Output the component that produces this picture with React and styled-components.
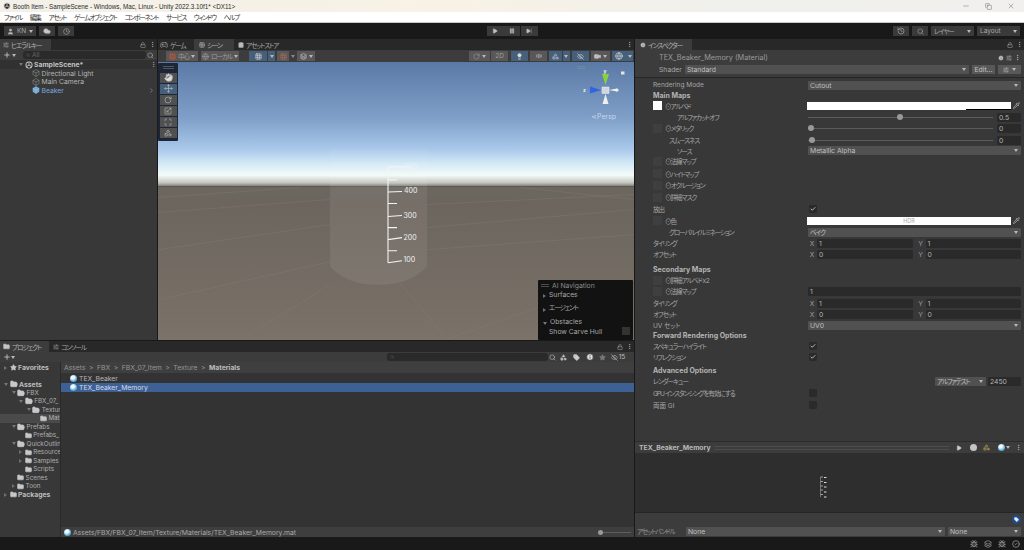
import React from "react";
import styled, { createGlobalStyle } from "styled-components";
import {
  Box, Check, ChevronRight, Clock, Cloud, Copy, EyeOff, Folder, FolderOpen, Hand, History, Info, Layers, Lightbulb,
  Lock, Maximize, Minus, Move, MoreVertical, Pause, Pipette, Play, Plus, RotateCw, Scaling, Search, Square,
  SkipForward, SlidersHorizontal, Star, Tag, User, X, Gamepad2, Grid3x3, ShoppingBag, Volume2, Shapes, Video, Globe, CircleCheck, Bug,
} from "lucide-react";

const GlobalStyle = createGlobalStyle`
  html, body { margin: 0; padding: 0; background: #191919; }
  * { box-sizing: border-box; }
  svg { flex-shrink: 0; }
`;

const Root = styled.div`
  width: 1024px;
  height: 550px;
  overflow: hidden;
  display: flex;
  flex-direction: column;
  font-family: Inter, "Noto Sans CJK JP", sans-serif;
  font-feature-settings: "palt";
  font-size: 6.8px;
  white-space: nowrap;
  color: #b4b4b4;
  background: #191919;
`;

/* japanese strings run narrower than the installed CJK font */
const Ja = styled.span`
  font-size: 6.6px;
  letter-spacing: -1.1px;
`;

const TitleBar = styled.div`
  height: 12px;
  display: flex;
  align-items: center;
  padding: 0 0 0 3px;
  gap: 2px;
  color: #2a2a2a;
  font-family: "Liberation Sans", sans-serif;
  font-size: 6.3px;
  background: linear-gradient(90deg, #f3f0e9 0%, #f8f2e6 45%, #f0f0ec 70%, #f1f0ee 100%);
`;

const TitleText = styled.span`
  flex: 1;
`;

const WinButtons = styled.div`
  display: flex;
  align-items: center;
  gap: 15px;
  padding-right: 9px;
  color: #333;
`;

const MenuBar = styled.div`
  height: 11px;
  display: flex;
  align-items: center;
  padding-left: 4px;
  gap: 7.8px;
  background: #fff;
  color: #333;
  font-size: 6.6px;
  letter-spacing: -1.2px;
  border-bottom: 1px solid #c8c8c8;
`;

const MainToolbar = styled.div`
  height: 16px;
  display: grid;
  grid-template-columns: 1fr auto 1fr;
  align-items: center;
  padding: 0 4px;
  background: #191919;
`;

const Group = styled.div`
  display: flex;
  align-items: center;
  justify-content: ${(p) => p.$justify || "flex-start"};
  gap: ${(p) => p.$gap ?? 3}px;
`;

const TopButton = styled.div`
  width: ${(p) => p.$w}px;
  height: 10px;
  display: flex;
  align-items: center;
  justify-content: ${(p) => p.$justify || "center"};
  gap: 3px;
  padding: 0 3px;
  background: #3a3a3a;
  color: #a8a8a8;
  font-size: 6.5px;
`;

const Caret = styled.span`
  display: inline-block;
  flex: none;
  margin-left: ${(p) => (p.$push ? "auto" : "0")};
  border-left: 2.5px solid transparent;
  border-right: 2.5px solid transparent;
  border-top: 3px solid ${(p) => p.$color || "#b8b8b8"};
`;

const DimCaret = styled(Caret)`
  margin: 0 2px;
  border-top-color: #888;
`;

const Workspace = styled.div`
  height: 498px;
  display: flex;
`;

const LeftColumn = styled.div`
  width: 635px;
  display: flex;
  flex-direction: column;
`;

const TopRow = styled.div`
  height: 301px;
  display: flex;
`;

const Panel = styled.div`
  display: flex;
  flex-direction: column;
  width: ${(p) => (p.$w ? `${p.$w}px` : "auto")};
  flex: ${(p) => (p.$w ? "none" : 1)};
  border-right: 1px solid #191919;
  min-width: 0;
`;

const TabStrip = styled.div`
  height: 11px;
  display: flex;
  align-items: center;
  background: #282828;
  color: #a6a6a6;
  font-size: 6.6px;
  letter-spacing: -1.05px;
  flex: none;
`;

const ProjectStrip = styled(TabStrip)`
  height: 12px;
  border-top: 1px solid #191919;
`;

const Tab = styled.div`
  height: 11px;
  width: ${(p) => p.$w}px;
  display: flex;
  align-items: center;
  gap: 2px;
  padding-left: ${(p) => p.$pad ?? 3}px;
  background: ${(p) => (p.$active ? "#3c3c3c" : "transparent")};
  color: ${(p) => (p.$active ? "#b0b0b0" : "#a6a6a6")};
`;

const StripEnd = styled.div`
  margin-left: auto;
  display: flex;
  align-items: center;
  gap: 3px;
  padding-right: 1px;
  color: #a8a8a8;
`;

const HierarchyBar = styled.div`
  height: 10px;
  display: flex;
  align-items: center;
  padding: 0 3px;
  gap: 1px;
  background: #3c3c3c;
  color: #c8c8c8;
`;

const SearchBox = styled.div`
  flex: ${(p) => (p.$w ? "none" : 1)};
  width: ${(p) => (p.$w ? `${p.$w}px` : "auto")};
  height: 7.5px;
  display: flex;
  align-items: center;
  gap: 2px;
  padding-left: 3px;
  margin-left: ${(p) => p.$left ?? 6}px;
  border-radius: 3px;
  background: #2a2a2a;
  color: #666;
  font-size: 6.5px;
`;

const TreePane = styled.div`
  flex: 1;
  background: #383838;
`;

const SceneRow = styled.div`
  height: 9px;
  display: flex;
  align-items: center;
  padding-left: 19px;
  gap: 1.5px;
  background: #313131;
  font-weight: 700;
  color: #c4c4c4;
`;

const ObjectRow = styled.div`
  height: 8.5px;
  display: flex;
  align-items: center;
  padding: 0 2px 0 32px;
  gap: 1.5px;
  color: ${(p) => (p.$blue ? "#7ba6dc" : "#b4b4b4")};
`;

const PushRight = styled.span`
  margin-left: auto;
  display: flex;
  align-items: center;
  color: #a0a0a0;
`;

const Triangle = styled.span`
  display: inline-block;
  flex: none;
  width: 0;
  height: 0;
  ${(p) =>
    p.$open
      ? `border-left: 2.5px solid transparent; border-right: 2.5px solid transparent; border-top: 3.5px solid #777;`
      : `border-top: 2.5px solid transparent; border-bottom: 2.5px solid transparent; border-left: 3.5px solid #6f6f6f;`}
`;

const UnityMark = () => (
  <svg width="8" height="8" viewBox="0 0 16 16">
    <circle cx="8" cy="8" r="7" fill="#d8d8d8" />
    <path d="M8 2l5 3v6l-5 3-5-3V5z" fill="#2e2e2e" />
    <path d="M8 8V2M8 8l5 3M8 8l-5 3" stroke="#d8d8d8" strokeWidth="1.6" />
  </svg>
);

const SceneBar = styled.div`
  height: 12px;
  display: flex;
  align-items: center;
  padding: 0 1px 0 8px;
  background: #3c3c3c;
  flex: none;
`;

const BarButton = styled.div`
  width: ${(p) => p.$w}px;
  height: 10px;
  margin-left: ${(p) => (p.$push ? "auto" : `${p.$left ?? 0}px`)};
  display: flex;
  align-items: center;
  justify-content: ${(p) => p.$justify || "center"};
  gap: 2px;
  padding: 0 2px;
  flex: none;
  background: ${(p) => (p.$active ? "#46607c" : "#585858")};
  color: ${(p) => (p.$dim ? "#9c9c9c" : "#d4d4d4")};
  font-size: 6.5px;
`;

const Viewport = styled.div`
  position: relative;
  flex: 1;
  overflow: hidden;
`;

const SceneArt = styled.svg`
  display: block;
  width: 100%;
  height: 100%;
`;

const ToolPalette = styled.div`
  position: absolute;
  left: 0;
  top: 1px;
  width: 20px;
  height: 78px;
  display: flex;
  flex-direction: column;
  align-items: center;
  gap: 0.5px;
  background: #1c2636;
  border-radius: 1px;
`;

const Grip = styled.div`
  width: 11px;
  height: 3px;
  margin: 3px 0;
  border-top: 1px solid #4e5662;
  border-bottom: 1px solid #4e5662;
`;

const ToolButton = styled.div`
  width: 17px;
  height: 10.5px;
  display: flex;
  align-items: center;
  justify-content: center;
  flex: none;
  background: ${(p) => (p.$active ? "#46607c" : "#505050")};
  color: #b4b4b4;
`;

const Gizmo = styled.svg`
  position: absolute;
  right: 0;
  top: 0;
  width: 76px;
  height: 70px;
`;

const OverlayPanel = styled.div`
  position: absolute;
  right: 1px;
  bottom: 0;
  width: 95px;
  height: 60px;
  background: #121212;
  border-radius: 1px;
  color: #a8a8a8;
`;

const OverlayTitle = styled.div`
  height: 10px;
  display: flex;
  align-items: center;
  gap: 3px;
  padding-left: 3px;
  color: #8b8b8b;
`;

const OverlayGrip = styled.span`
  width: 8px;
  height: 3px;
  border-top: 1px solid #4c4c4c;
  border-bottom: 1px solid #4c4c4c;
`;

const OverlayRow = styled.div`
  height: ${(p) => p.$h}px;
  display: flex;
  align-items: flex-start;
  gap: 3px;
  padding-left: ${(p) => p.$pad ?? 5}px;
  line-height: 9px;
`;

const OverlayArrow = styled.span`
  margin-top: 1px;
`;

const SmallBox = styled.div`
  width: 8px;
  height: 8px;
  margin-left: auto;
  margin-right: 3px;
  background: #333;
`;

const ProjectBar = styled.div`
  height: 10px;
  display: flex;
  align-items: center;
  padding: 0 2px 0 3px;
  background: #3c3c3c;
  color: #c8c8c8;
  flex: none;
`;

const IconSlot = styled.span`
  width: ${(p) => p.$w ?? 13}px;
  display: flex;
  align-items: center;
  justify-content: center;
  gap: 1px;
  color: ${(p) => p.$color || "#bdbdbd"};
  font-size: 6.5px;
`;

const ProjectBody = styled.div`
  flex: 1;
  display: flex;
  min-height: 0;
`;

const ProjectTree = styled.div`
  width: 61px;
  flex: none;
  overflow: hidden;
  padding-top: 1.5px;
  font-size: 6.3px;
  background: #383838;
  border-right: 1px solid #2a2a2a;
`;

const TreeRow = styled.div`
  height: 8.5px;
  display: flex;
  align-items: center;
  padding-left: ${(p) => 4 + p.$depth * 7.6}px;
  margin-top: ${(p) => p.$gap ?? 0}px;
  gap: 1.5px;
  background: ${(p) => (p.$hl ? "#4a4a4a" : "transparent")};
  font-size: ${(p) => (p.$bold ? "6.8px" : "inherit")};
  font-weight: ${(p) => (p.$bold ? 700 : 400)};
  color: ${(p) => (p.$bold ? "#bdbdbd" : "#b0b0b0")};
`;

const ArrowSlot = styled.span`
  width: 4px;
  flex: none;
  display: flex;
  align-items: center;
`;

const FileArea = styled.div`
  flex: 1;
  display: flex;
  flex-direction: column;
  background: #333;
  min-width: 0;
`;

const Breadcrumb = styled.div`
  height: 11px;
  display: flex;
  align-items: center;
  padding-left: 3px;
  gap: 3.5px;
  flex: none;
  background: #3f3f3f;
  color: #959595;
`;

const Crumb = styled.span`
  font-weight: ${(p) => (p.$current ? 700 : 400)};
  color: ${(p) => (p.$current ? "#bcbcbc" : "#959595")};
`;

const FileList = styled.div`
  flex: 1;
  padding-top: 1.5px;
`;

const FileRow = styled.div`
  height: 8.5px;
  display: flex;
  align-items: center;
  gap: 2px;
  padding-left: 9px;
  background: ${(p) => (p.$selected ? "#3e6195" : "transparent")};
  color: ${(p) => (p.$selected ? "#d4dceb" : "#b4b4b4")};
`;

const Sphere = styled.span`
  display: inline-block;
  flex: none;
  width: 7px;
  height: 7px;
  border-radius: 50%;
  background: ${(p) =>
    p.$flat ? "#c4c4c4" : "radial-gradient(circle at 40% 35%, #f4f8fb 0 25%, #6fc0e6 55%, #2d6f96 100%)"};
`;

const PathBar = styled.div`
  height: 10px;
  display: flex;
  align-items: center;
  gap: 2px;
  padding: 0 3px 0 3px;
  flex: none;
  background: #3e3e3e;
  color: #a8a8a8;
`;

const ZoomSlider = styled.div`
  position: relative;
  margin-left: auto;
  width: 33px;
  height: 1px;
  background: #5e5e5e;
`;

const ZoomKnob = styled.span`
  position: absolute;
  left: 0;
  top: -2px;
  width: 5px;
  height: 5px;
  border-radius: 50%;
  background: #999;
`;

const Inspector = styled.div`
  flex: 1;
  display: flex;
  flex-direction: column;
  min-width: 0;
  background: #383838;
`;

const MatHeader = styled.div`
  height: 28px;
  flex: none;
  padding: 1px 3px 0 24px;
  background: #3c3c3c;
  border-bottom: 1px solid #262626;
`;

const MatTitleRow = styled.div`
  height: 13px;
  display: flex;
  align-items: center;
  font-size: 7.3px;
  color: #999;
`;

const MatIcons = styled.div`
  margin-left: auto;
  display: flex;
  align-items: center;
  gap: 2px;
  color: #bbb;
`;

const ShaderRow = styled.div`
  height: 11px;
  display: flex;
  align-items: center;
  gap: 3px;
  color: #a8a8a8;
`;

const Dropdown = styled.div`
  width: ${(p) => (p.$w ? `${p.$w}px` : "auto")};
  flex: ${(p) => (p.$w ? "none" : 1)};
  height: 9px;
  display: flex;
  align-items: center;
  padding: 0 3px 0 2px;
  border-radius: 1px;
  background: #515151;
  color: #c0c0c0;
  margin-left: ${(p) => p.$left ?? 0}px;
`;

const SmallButton = styled.div`
  width: 23px;
  height: 9px;
  display: flex;
  align-items: center;
  justify-content: center;
  gap: 3px;
  background: #585858;
  color: #c4c4c4;
`;

const PropList = styled.div`
  flex: 1;
  padding: 2px 3px 0 18px;
`;

const PropRow = styled.div`
  height: ${(p) => p.$h}px;
  display: flex;
  align-items: flex-start;
`;

const PropLabel = styled.div`
  width: 155px;
  flex: none;
  height: 10px;
  display: flex;
  align-items: center;
  gap: 3px;
  padding-left: ${(p) => p.$indent ?? 0}px;
  font-size: ${(p) => (p.$latin ? 6.5 : 6.6)}px;
  letter-spacing: ${(p) => (p.$latin ? 0 : -1.05)}px;
  color: #a6a6a6;
`;

const SectionTitle = styled.div`
  height: 10px;
  display: flex;
  align-items: center;
  font-size: 7px;
  font-weight: 700;
  color: #b4b4b4;
`;

const Thumb = styled.span`
  width: 9px;
  height: 9px;
  flex: none;
  background: ${(p) => (p.$white ? "#fff" : "#3f3f3f")};
`;

const Control = styled.div`
  flex: 1;
  height: 10px;
  display: flex;
  align-items: center;
  gap: 1px;
  min-width: 0;
`;

const ColorField = styled.div`
  position: relative;
  flex: 1;
  height: 8px;
  margin-left: -1px;
  display: flex;
  align-items: center;
  justify-content: center;
  background: #fff;
  color: #a8a8a8;
  font-size: 5.5px;
`;

const AlphaMark = styled.span`
  position: absolute;
  right: 0;
  bottom: 0;
  width: 45px;
  height: 1px;
  background: #000;
`;

const PipetteSlot = styled.span`
  width: 9px;
  display: flex;
  justify-content: center;
  color: #c8c8c8;
`;

const SliderTrack = styled.div`
  position: relative;
  width: 185px;
  height: 1px;
  flex: none;
  background: #5c5c5c;
`;

const SliderKnob = styled.span`
  position: absolute;
  left: ${(p) => p.$left}px;
  top: -2.5px;
  width: 6px;
  height: 6px;
  border-radius: 50%;
  background: #999;
`;

const NumField = styled.div`
  flex: ${(p) => (p.$w ? "none" : 1)};
  width: ${(p) => (p.$w ? `${p.$w}px` : "auto")};
  height: 9px;
  margin-left: ${(p) => p.$left ?? 0}px;
  display: flex;
  align-items: center;
  padding-left: 2px;
  border-radius: 1px;
  background: #2a2a2a;
  color: #b4b4b4;
`;

const AxisLabel = styled.span`
  width: 8px;
  flex: none;
  text-align: center;
  margin-left: ${(p) => p.$left ?? 0}px;
  color: #9a9a9a;
`;

const CheckBox = styled.span`
  width: 8px;
  height: 8px;
  flex: none;
  margin-left: 1px;
  display: flex;
  align-items: center;
  justify-content: center;
  border-radius: 1px;
  background: #2a2a2a;
  color: #e2e2e2;
`;

const PreviewBar = styled.div`
  height: 12px;
  flex: none;
  display: flex;
  align-items: center;
  padding: 0 2px 0 4px;
  background: #3c3c3c;
  border-top: 1px solid #2c2c2c;
  font-weight: 700;
  color: #b8b8b8;
`;

const GripLines = styled.span`
  flex: 1;
  height: 4px;
  margin: 0 3px;
  border-top: 1px solid #4c4c4c;
  border-bottom: 1px solid #4c4c4c;
`;

const PreviewArea = styled.div`
  height: 59px;
  flex: none;
  display: flex;
  align-items: center;
  justify-content: center;
  padding: 8px 14px 0 0;
  background: #2e2e2e;
`;

const BundleArea = styled.div`
  height: 25px;
  flex: none;
  display: flex;
  flex-direction: column;
  padding: 2px 3px 0 2px;
  background: #3c3c3c;
  border-top: 1px solid #262626;
`;

const TagRow = styled.div`
  height: 11px;
  display: flex;
  justify-content: flex-end;
`;

const TagBadge = styled.span`
  width: 9px;
  height: 9px;
  border-radius: 50%;
  display: flex;
  align-items: center;
  justify-content: center;
  background: #234a86;
  color: #dfe8f5;
`;

const BundleRow = styled.div`
  height: 10px;
  display: flex;
  align-items: center;
  color: #969696;
`;

const BundleLabel = styled(Ja)`
  width: 49px;
  flex: none;
`;

const StatusBar = styled.div`
  height: 13px;
  flex: none;
  display: flex;
  align-items: center;
  justify-content: flex-end;
  gap: 6px;
  padding-right: 4px;
  background: #191919;
  color: #a8a8a8;
`;

const Preview = () => (
  <svg width="8" height="22" viewBox="0 0 8 22">
    <path d="M1.5 1v20" stroke="#999" strokeWidth="0.6" />
    {[1, 5.5, 10, 14, 18.5].map((y) => (
      <path key={y} d={`M1.5 ${y}h2.5`} stroke="#bbb" strokeWidth="0.8" />
    ))}
    {[1.5, 6.5, 11, 16, 21].map((y) => (
      <path key={y} d={`M5 ${y}h2.5`} stroke="#ddd" strokeWidth="1" />
    ))}
  </svg>
);

const treeItems = [
  { name: "Favorites", depth: 0, star: true, bold: true },
  { name: "Assets", depth: 0, open: true, bold: true, gap: 8 },
  { name: "FBX", depth: 1, open: true },
  { name: "FBX_07_", depth: 2, open: true },
  { name: "Textur", depth: 3, open: true },
  { name: "Mati", depth: 4, leaf: true, hl: true },
  { name: "Prefabs", depth: 1, open: true },
  { name: "Prefabs_", depth: 2, leaf: true },
  { name: "QuickOutlin", depth: 1, open: true },
  { name: "Resource", depth: 2 },
  { name: "Samples", depth: 2 },
  { name: "Scripts", depth: 2, leaf: true },
  { name: "Scenes", depth: 1, leaf: true },
  { name: "Toon", depth: 1 },
  { name: "Packages", depth: 0, bold: true },
];

const menus = ["ファイル", "編集", "アセット", "ゲームオブジェクト", "コンポーネント", "サービス", "ウィンドウ", "ヘルプ"];

const Xy = ({ x, y }) => (
  <Control>
    <AxisLabel>X</AxisLabel>
    <NumField>{x}</NumField>
    <AxisLabel $left={3}>Y</AxisLabel>
    <NumField>{y}</NumField>
  </Control>
);

const MapLabel = ({ children }) => (
  <PropLabel>
    <Thumb />
    <span>{children}</span>
  </PropLabel>
);

const App = () => {
  return (
    <Root>
      <GlobalStyle />
      <TitleBar>
        <UnityMark />
        <TitleText>Booth Item - SampleScene - Windows, Mac, Linux - Unity 2022.3.10f1* &lt;DX11&gt;</TitleText>
        <WinButtons>
          <Minus size={8} strokeWidth={1} />
          <Copy size={7} strokeWidth={1.2} />
          <X size={8} strokeWidth={1} />
        </WinButtons>
      </TitleBar>
      <MenuBar>
        {menus.map((m) => (
          <span key={m}>{m}</span>
        ))}
      </MenuBar>
      <MainToolbar>
        <Group>
          <TopButton $w={32}>
            <User size={7} fill="#bbb" />
            KN
            <Caret />
          </TopButton>
          <TopButton $w={16}>
            <Cloud size={8} fill="#c8c8c8" />
          </TopButton>
          <TopButton $w={16}>
            <Clock size={7} />
          </TopButton>
        </Group>
        <Group $gap={0.5}>
          <TopButton $w={16}>
            <Play size={6} fill="#c0c0c0" />
          </TopButton>
          <TopButton $w={17}>
            <Pause size={6} fill="#c0c0c0" />
          </TopButton>
          <TopButton $w={17}>
            <SkipForward size={6} fill="#c0c0c0" />
          </TopButton>
        </Group>
        <Group $justify="flex-end">
          <TopButton $w={16}>
            <History size={8} />
          </TopButton>
          <TopButton $w={16}>
            <Search size={7} />
          </TopButton>
          <TopButton $w={43} $justify="flex-start">
            <Ja>レイヤー</Ja>
            <Caret $push />
          </TopButton>
          <TopButton $w={43} $justify="flex-start">
            Layout
            <Caret $push />
          </TopButton>
        </Group>
      </MainToolbar>
      <Workspace>
        <LeftColumn>
          <TopRow>
            <Panel $w={158}>
              <TabStrip>
                <Tab $w={51} $active>
                  <SlidersHorizontal size={6} />
                  ヒエラルキー
                </Tab>
                <StripEnd>
                  <Lock size={6} />
                  <MoreVertical size={7} />
                </StripEnd>
              </TabStrip>
              <HierarchyBar>
                <Plus size={8} strokeWidth={2.5} />
                <Caret />
                <SearchBox>
                  <Search size={4} />
                  All
                </SearchBox>
                <Search size={7} color="#aaa" />
              </HierarchyBar>
              <TreePane>
                <SceneRow>
                  <Triangle $open />
                  <UnityMark />
                  <span>SampleScene*</span>
                  <PushRight>
                    <MoreVertical size={7} />
                  </PushRight>
                </SceneRow>
                <ObjectRow>
                  <Box size={8} strokeWidth={1.2} />
                  Directional Light
                </ObjectRow>
                <ObjectRow>
                  <Box size={8} strokeWidth={1.2} />
                  Main Camera
                </ObjectRow>
                <ObjectRow $blue>
                  <Box size={8} fill="#6aa8dc" color="#bcd9ee" strokeWidth={1.2} />
                  Beaker
                  <PushRight>
                    <ChevronRight size={7} />
                  </PushRight>
                </ObjectRow>
              </TreePane>
            </Panel>
            <Panel>
              <TabStrip>
                <Tab $w={36} $pad={2}>
                  <Gamepad2 size={8} />
                  ゲーム
                </Tab>
                <Tab $w={40} $pad={5} $active>
                  <Grid3x3 size={6} />
                  シーン
                </Tab>
                <Tab $w={60} $pad={4}>
                  <ShoppingBag size={6} fill="#bbb" />
                  アセットストア
                </Tab>
                <StripEnd>
                  <MoreVertical size={7} />
                </StripEnd>
              </TabStrip>
              <SceneBar>
                <BarButton $w={32} $dim>
                  <Square size={7} color="#c25c44" fill="#8d5548" />
                  <Ja>中心</Ja>
                  <Caret />
                </BarButton>
                <BarButton $w={38} $left={3} $dim>
                  <Globe size={7} />
                  <Ja>ローカル</Ja>
                  <Caret />
                </BarButton>
                <BarButton $w={18} $left={10} $active>
                  <Grid3x3 size={7} />
                </BarButton>
                <BarButton $w={7} $left={1} $active>
                  <Caret />
                </BarButton>
                <BarButton $w={12} $left={2} $dim>
                  <Grid3x3 size={7} color="#a56a5c" />
                </BarButton>
                <DimCaret />
                <BarButton $w={18}>
                  <Layers size={7} />
                  <Caret />
                </BarButton>
                <BarButton $w={21} $push $dim>
                  <RotateCw size={7} />
                  <Caret />
                </BarButton>
                <BarButton $w={17} $left={1} $dim>
                  2D
                </BarButton>
                <BarButton $w={17} $left={3} $active>
                  <Lightbulb size={7} fill="#ddd" />
                </BarButton>
                <BarButton $w={17} $left={2}>
                  <Volume2 size={6} />
                </BarButton>
                <BarButton $w={13} $left={2} $active>
                  <Shapes size={7} />
                </BarButton>
                <BarButton $w={7} $left={0.5} $active>
                  <Caret />
                </BarButton>
                <BarButton $w={17} $left={2} $active>
                  <EyeOff size={7} />
                </BarButton>
                <BarButton $w={19} $left={2}>
                  <Video size={7} fill="#bbb" />
                  <Caret />
                </BarButton>
                <BarButton $w={14} $left={2} $active>
                  <Globe size={8} />
                </BarButton>
                <BarButton $w={7} $left={0.5} $active>
                  <Caret />
                </BarButton>
              </SceneBar>
              <Viewport>
                <SceneArt viewBox="158 63 476 277" preserveAspectRatio="none">
                  <defs>
                    <linearGradient id="sky" x1="0" y1="0" x2="0" y2="1">
                      <stop offset="0" stopColor="#5b79a5" />
                      <stop offset="0.45" stopColor="#7f9fc8" />
                      <stop offset="0.7" stopColor="#a9c8ea" />
                      <stop offset="0.82" stopColor="#d4eaf6" />
                      <stop offset="0.91" stopColor="#f4fbf8" />
                      <stop offset="0.97" stopColor="#c4c6c0" />
                      <stop offset="1" stopColor="#7c7a72" />
                    </linearGradient>
                    <linearGradient id="floor" x1="0" y1="0" x2="0" y2="1">
                      <stop offset="0" stopColor="#6b675f" />
                      <stop offset="0.1" stopColor="#6b655d" />
                      <stop offset="1" stopColor="#7b7269" />
                    </linearGradient>
                  </defs>
                  <rect x="158" y="63" width="476" height="124" fill="url(#sky)" />
                  <rect x="158" y="187" width="476" height="153" fill="url(#floor)" />
                  <g stroke="#8a827a" strokeWidth="0.6" opacity="0.55" fill="none">
                    <path d="M158 213L330 200M158 250L330 225M427 228L634 210M427 205L634 195" />
                    <path d="M158 300L330 262M400 283L447 340M447 339L540 307M427 250L634 235" />
                    <path d="M240 340L330 285M300 188L158 198M520 188L634 200" />
                  </g>
                  <path d="M330 183V266Q345 285 378 285Q412 285 427 266V183Z" fill="#fff" opacity="0.07" />
                  <path d="M330 150V183H427V150Z" fill="#fff" opacity="0.05" />
                  <g stroke="#f4f4f4" strokeWidth="1.1" fill="none">
                    <path d="M388 167.5V263" />
                    <path d="M388 167.5H411M388 180.5H397M388 192.5L402 192M388 204H397M388 217L402 216M388 228H397M388 240L402 238M388 251H397M388 263L402 261" />
                  </g>
                  <g fill="#f0f0f0" fontSize="7" fontFamily="Inter, sans-serif">
                    <text x="404" y="194">400</text>
                    <text x="403.5" y="218">300</text>
                    <text x="403.5" y="240">200</text>
                    <text x="403.5" y="262">100</text>
                    <text x="404" y="170" fill="#eef5f8" opacity="0.7">500</text>
                  </g>
                </SceneArt>
                <ToolPalette>
                  <Grip />
                  <ToolButton>
                    <Hand size={9} fill="#ddd" />
                  </ToolButton>
                  <ToolButton $active>
                    <Move size={9} />
                  </ToolButton>
                  <ToolButton>
                    <RotateCw size={8} />
                  </ToolButton>
                  <ToolButton>
                    <Scaling size={8} />
                  </ToolButton>
                  <ToolButton>
                    <Maximize size={8} />
                  </ToolButton>
                  <ToolButton>
                    <Shapes size={8} />
                  </ToolButton>
                </ToolPalette>
                <Gizmo viewBox="558 63 76 70">
                  <path d="M605.5 86L602 75H609Z" fill="#86d33e" />
                  <path d="M601 91L590 87.5V94.5Z" fill="#2f66e0" />
                  <path d="M605.5 95L602.5 105H608.5Z" fill="#f0f0f0" />
                  <path d="M609 91L617 89.5V92.5Z" fill="#f0f0f0" />
                  <circle cx="617" cy="91" r="1.6" fill="#f0f0f0" />
                  <rect x="602" y="88" width="7" height="6.5" fill="#cfd6de" stroke="#eef" strokeWidth="0.5" />
                  <text x="603.5" y="74" fontSize="5" fill="#f2f2f2" fontFamily="Inter, sans-serif" fontWeight="700">y</text>
                  <text x="583" y="93" fontSize="5" fill="#f2f2f2" fontFamily="Inter, sans-serif" fontWeight="700">z</text>
                  <rect x="621" y="72.5" width="3.5" height="3" fill="#e4e4e4" />
                  <path d="M577 67.5h8M577 69.5h8" stroke="#7b8ba6" strokeWidth="0.7" />
                  <text x="591" y="120" fontSize="7" fill="#c8d6ea" fontFamily="Inter, sans-serif">⋖Persp</text>
                </Gizmo>
                <OverlayPanel>
                  <OverlayTitle>
                    <OverlayGrip />
                    AI Navigation
                  </OverlayTitle>
                  <OverlayRow $h={13.5}>
                    <OverlayArrow>
                      <Triangle />
                    </OverlayArrow>
                    Surfaces
                  </OverlayRow>
                  <OverlayRow $h={13.5}>
                    <OverlayArrow>
                      <Triangle />
                    </OverlayArrow>
                    <Ja>エージェント</Ja>
                  </OverlayRow>
                  <OverlayRow $h={10}>
                    <OverlayArrow>
                      <Triangle $open />
                    </OverlayArrow>
                    Obstacles
                  </OverlayRow>
                  <OverlayRow $h={10} $pad={11}>
                    Show Carve Hull
                    <SmallBox />
                  </OverlayRow>
                </OverlayPanel>
              </Viewport>
            </Panel>
          </TopRow>
          <Panel>
            <ProjectStrip>
              <Tab $w={49} $active>
                <Folder size={7} fill="#c4c4c4" />
                プロジェクト
              </Tab>
              <Tab $w={50} $pad={4}>
                <SlidersHorizontal size={6} />
                コンソール
              </Tab>
              <StripEnd>
                <Lock size={6} />
                <MoreVertical size={7} />
              </StripEnd>
            </ProjectStrip>
            <ProjectBar>
              <Plus size={8} strokeWidth={2.5} />
              <Caret />
              <SearchBox $w={161} $left={372}>
                <Search size={4} />
              </SearchBox>
              <IconSlot $w={9}>
                <Search size={7} />
              </IconSlot>
              <IconSlot>
                <Shapes size={7} fill="#bbb" />
              </IconSlot>
              <IconSlot>
                <Tag size={7} fill="#ccc" />
              </IconSlot>
              <IconSlot>
                <Info size={8} fill="#ddd" color="#333" />
              </IconSlot>
              <IconSlot>
                <Star size={7} fill="#777" color="#777" />
              </IconSlot>
              <IconSlot $w={18}>
                <EyeOff size={7} />
                15
              </IconSlot>
            </ProjectBar>
            <ProjectBody>
              <ProjectTree>
                {treeItems.map((t) => (
                  <TreeRow key={t.name} $depth={t.depth} $bold={t.bold} $hl={t.hl} $gap={t.gap}>
                    <ArrowSlot>{!t.leaf && <Triangle $open={t.open} />}</ArrowSlot>
                    {t.star ? (
                      <Star size={7} fill="#c8c8c8" color="#c8c8c8" />
                    ) : t.open ? (
                      <FolderOpen size={8} fill="#c8c8c8" color="#c8c8c8" />
                    ) : (
                      <Folder size={7} fill="#c8c8c8" color="#c8c8c8" />
                    )}
                    {t.name}
                  </TreeRow>
                ))}
              </ProjectTree>
              <FileArea>
                <Breadcrumb>
                  <Crumb>Assets</Crumb>
                  <Crumb>&gt;</Crumb>
                  <Crumb>FBX</Crumb>
                  <Crumb>&gt;</Crumb>
                  <Crumb>FBX_07_Item</Crumb>
                  <Crumb>&gt;</Crumb>
                  <Crumb>Texture</Crumb>
                  <Crumb>&gt;</Crumb>
                  <Crumb $current>Materials</Crumb>
                </Breadcrumb>
                <FileList>
                  <FileRow>
                    <Sphere />
                    TEX_Beaker
                  </FileRow>
                  <FileRow $selected>
                    <Sphere />
                    TEX_Beaker_Memory
                  </FileRow>
                </FileList>
                <PathBar>
                  <Sphere />
                  Assets/FBX/FBX_07_Item/Texture/Materials/TEX_Beaker_Memory.mat
                  <ZoomSlider>
                    <ZoomKnob />
                  </ZoomSlider>
                </PathBar>
              </FileArea>
            </ProjectBody>
          </Panel>
        </LeftColumn>
        <Inspector>
          <TabStrip>
            <Tab $w={57} $pad={5} $active>
              <Info size={6} fill="#ccc" color="#333" />
              インスペクター
            </Tab>
            <StripEnd>
              <Lock size={6} />
              <MoreVertical size={7} />
            </StripEnd>
          </TabStrip>
          <MatHeader>
            <MatTitleRow>
              TEX_Beaker_Memory (Material)
              <MatIcons>
                <Info size={6} fill="#ccc" color="#333" />
                <SlidersHorizontal size={6} />
                <MoreVertical size={7} />
              </MatIcons>
            </MatTitleRow>
            <ShaderRow>
              Shader
              <Dropdown>
                Standard
                <Caret $push />
              </Dropdown>
              <SmallButton>Edit...</SmallButton>
              <SmallButton>
                <SlidersHorizontal size={6} />
                <Caret />
              </SmallButton>
            </ShaderRow>
          </MatHeader>
          <PropList>
            <PropRow $h={10}>
              <PropLabel $latin>Rendering Mode</PropLabel>
              <Control>
                <Dropdown>
                  Cutout
                  <Caret $push />
                </Dropdown>
              </Control>
            </PropRow>
            <PropRow $h={10.5}>
              <SectionTitle>Main Maps</SectionTitle>
            </PropRow>
            <PropRow $h={11.5}>
              <PropLabel>
                <Thumb $white />
                <span>⊙アルベド</span>
              </PropLabel>
              <Control>
                <ColorField>
                  <AlphaMark />
                </ColorField>
                <PipetteSlot>
                  <Pipette size={7} />
                </PipetteSlot>
              </Control>
            </PropRow>
            <PropRow $h={11}>
              <PropLabel $indent={24}>アルファカットオフ</PropLabel>
              <Control>
                <SliderTrack>
                  <SliderKnob $left={89} />
                </SliderTrack>
                <NumField $left={3}>0.5</NumField>
              </Control>
            </PropRow>
            <PropRow $h={12}>
              <MapLabel>⊙メタリック</MapLabel>
              <Control>
                <SliderTrack>
                  <SliderKnob $left={0} />
                </SliderTrack>
                <NumField $left={3}>0</NumField>
              </Control>
            </PropRow>
            <PropRow $h={10.5}>
              <PropLabel $indent={16}>スムースネス</PropLabel>
              <Control>
                <SliderTrack>
                  <SliderKnob $left={1} />
                </SliderTrack>
                <NumField $left={3}>0</NumField>
              </Control>
            </PropRow>
            <PropRow $h={10.5}>
              <PropLabel $indent={24}>ソース</PropLabel>
              <Control>
                <Dropdown>
                  Metallic Alpha
                  <Caret $push />
                </Dropdown>
              </Control>
            </PropRow>
            <PropRow $h={12.5}>
              <MapLabel>⊙法線マップ</MapLabel>
            </PropRow>
            <PropRow $h={11.5}>
              <MapLabel>⊙ハイトマップ</MapLabel>
            </PropRow>
            <PropRow $h={12}>
              <MapLabel>⊙オクルージョン</MapLabel>
            </PropRow>
            <PropRow $h={12}>
              <MapLabel>⊙詳細マスク</MapLabel>
            </PropRow>
            <PropRow $h={11.5}>
              <PropLabel>放出</PropLabel>
              <Control>
                <CheckBox>
                  <Check size={6} strokeWidth={3} />
                </CheckBox>
              </Control>
            </PropRow>
            <PropRow $h={11.5}>
              <MapLabel>⊙色</MapLabel>
              <Control>
                <ColorField>HDR</ColorField>
                <PipetteSlot>
                  <Pipette size={7} />
                </PipetteSlot>
              </Control>
            </PropRow>
            <PropRow $h={11}>
              <PropLabel $indent={16}>グローバルイルミネーション</PropLabel>
              <Control>
                <Dropdown>
                  <Ja>ベイク</Ja>
                  <Caret $push />
                </Dropdown>
              </Control>
            </PropRow>
            <PropRow $h={11}>
              <PropLabel>タイリング</PropLabel>
              <Xy x="1" y="1" />
            </PropRow>
            <PropRow $h={15.5}>
              <PropLabel>オフセット</PropLabel>
              <Xy x="0" y="0" />
            </PropRow>
            <PropRow $h={10.5}>
              <SectionTitle>Secondary Maps</SectionTitle>
            </PropRow>
            <PropRow $h={11}>
              <MapLabel>⊙詳細アルベド x 2</MapLabel>
            </PropRow>
            <PropRow $h={12}>
              <MapLabel>⊙法線マップ</MapLabel>
              <Control>
                <NumField>1</NumField>
              </Control>
            </PropRow>
            <PropRow $h={11}>
              <PropLabel>タイリング</PropLabel>
              <Xy x="1" y="1" />
            </PropRow>
            <PropRow $h={11}>
              <PropLabel>オフセット</PropLabel>
              <Xy x="0" y="0" />
            </PropRow>
            <PropRow $h={10.5}>
              <PropLabel $latin>UV セット</PropLabel>
              <Control>
                <Dropdown>
                  UV0
                  <Caret $push />
                </Dropdown>
              </Control>
            </PropRow>
            <PropRow $h={10}>
              <SectionTitle>Forward Rendering Options</SectionTitle>
            </PropRow>
            <PropRow $h={11}>
              <PropLabel>スペキュラーハイライト</PropLabel>
              <Control>
                <CheckBox>
                  <Check size={6} strokeWidth={3} />
                </CheckBox>
              </Control>
            </PropRow>
            <PropRow $h={14}>
              <PropLabel>リフレクション</PropLabel>
              <Control>
                <CheckBox>
                  <Check size={6} strokeWidth={3} />
                </CheckBox>
              </Control>
            </PropRow>
            <PropRow $h={10.5}>
              <SectionTitle>Advanced Options</SectionTitle>
            </PropRow>
            <PropRow $h={12}>
              <PropLabel>レンダーキュー</PropLabel>
              <Control>
                <Dropdown $w={51} $left={127}>
                  <Ja>アルファテスト</Ja>
                  <Caret $push />
                </Dropdown>
                <NumField $left={1}>2450</NumField>
              </Control>
            </PropRow>
            <PropRow $h={11.5}>
              <PropLabel>GPU インスタンシングを有効にする</PropLabel>
              <Control>
                <CheckBox />
              </Control>
            </PropRow>
            <PropRow $h={10}>
              <PropLabel $latin>両面 GI</PropLabel>
              <Control>
                <CheckBox />
              </Control>
            </PropRow>
          </PropList>
          <PreviewBar>
            TEX_Beaker_Memory
            <GripLines />
            <IconSlot $w={14}>
              <Play size={6} fill="#ccc" />
            </IconSlot>
            <IconSlot $w={14}>
              <Sphere $flat />
            </IconSlot>
            <IconSlot>
              <Shapes size={7} color="#d8b84a" />
            </IconSlot>
            <IconSlot $w={22}>
              <Sphere />
              <Caret />
            </IconSlot>
            <MoreVertical size={7} />
          </PreviewBar>
          <PreviewArea>
            <Preview />
          </PreviewArea>
          <BundleArea>
            <TagRow>
              <TagBadge>
                <Tag size={5} fill="#e6ecf6" />
              </TagBadge>
            </TagRow>
            <BundleRow>
              <BundleLabel>アセットバンドル</BundleLabel>
              <Dropdown>
                None
                <Caret $push />
              </Dropdown>
              <Dropdown $w={73} $left={3}>
                None
                <Caret $push />
              </Dropdown>
            </BundleRow>
          </BundleArea>
        </Inspector>
      </Workspace>
      <StatusBar>
        <Bug size={8} />
        <Layers size={8} />
        <Bug size={8} />
        <CircleCheck size={8} />
      </StatusBar>
    </Root>
  );
};

export default App;
